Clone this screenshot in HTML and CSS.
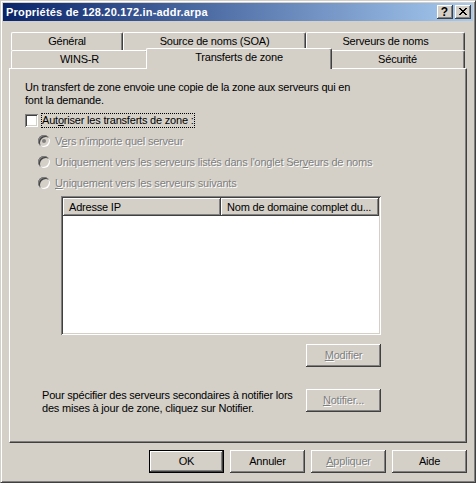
FILE: index.html
```html
<!DOCTYPE html>
<html lang="fr">
<head>
<meta charset="utf-8">
<title>Propriétés de 128.20.172.in-addr.arpa</title>
<link rel="stylesheet" href="styles.css">
</head>
<body>
<div class="window">
  <div class="titlebar">
    <span class="title">Propriétés de 128.20.172.in-addr.arpa</span>
    <div class="caption-btns">
      <span class="cbtn help">?</span>
      <span class="cbtn close">
        <svg width="8" height="7" viewBox="0 0 8 7" shape-rendering="crispEdges"><path d="M0 0h2v1H0zM6 0h2v1H6zM1 1h2v1H1zM5 1h2v1H5zM2 2h4v1H2zM3 3h2v1H3zM2 4h4v1H2zM1 5h2v1H1zM5 5h2v1H5zM0 6h2v1H0zM6 6h2v1H6z" fill="#000"/></svg>
      </span>
    </div>
  </div>
  <div class="client">
    <div class="tabctl">
      <div class="tabrow">
        <div class="tab tab-gen">Général</div>
        <div class="tab tab-soa">Source de noms (SOA)</div>
        <div class="tab tab-ns">Serveurs de noms</div>
      </div>
      <div class="tabrow">
        <div class="tab tab-wins">WINS-R</div>
        <div class="tab tab-xfer selected">Transferts de zone</div>
        <div class="tab tab-sec">Sécurité</div>
      </div>
      <div class="panel">
        <p class="intro">Un transfert de zone envoie une copie de la zone aux serveurs qui en<br>font la demande.</p>
        <div class="check-row">
          <span class="checkbox"></span>
          <span class="check-label focus">Aut<u>o</u>riser les transferts de zone :</span>
        </div>
        <div class="radios">
          <div class="radio-row"><span class="radio checked"></span><span class="disabled">V<u>e</u>rs n'importe quel serveur</span></div>
          <div class="radio-row"><span class="radio"></span><span class="disabled">Uniquement vers les serveurs listés dans l'onglet Ser<u>v</u>eurs de noms</span></div>
          <div class="radio-row"><span class="radio"></span><span class="disabled"><u>U</u>niquement vers les serveurs suivants</span></div>
        </div>
        <div class="listview">
          <div class="lv-header">
            <div class="lv-col col-ip">Adresse IP</div>
            <div class="lv-col col-fqdn">Nom de domaine complet du...</div>
          </div>
          <div class="lv-body"></div>
        </div>
        <div class="modify-row">
          <button class="btn" disabled><span class="disabled"><u>M</u>odifier</span></button>
        </div>
        <div class="notify-row">
          <p class="notify-text">Pour spécifier des serveurs secondaires à notifier lors<br>des mises à jour de zone, cliquez sur Notifier.</p>
          <button class="btn" disabled><span class="disabled"><u>N</u>otifier...</span></button>
        </div>
      </div>
    </div>
    <div class="dlg-buttons">
      <button class="btn default">OK</button>
      <button class="btn">Annuler</button>
      <button class="btn" disabled><span class="disabled"><u>A</u>ppliquer</span></button>
      <button class="btn">Aide</button>
    </div>
  </div>
</div>
</body>
</html>
```

FILE: styles.css
```css
* { box-sizing: border-box; }
html, body { margin: 0; padding: 0; background: #D4D0C8; }
body {
  font-family: "Liberation Sans", Arial, sans-serif;
  font-size: 11px;
  letter-spacing: -0.2px;
  color: #000;
}
u { text-decoration: underline; text-underline-offset: 1px; }

.window {
  width: 476px;
  height: 483px;
  background: #D4D0C8;
  border: 1px solid;
  border-color: #D4D0C8 #404040 #404040 #D4D0C8;
  box-shadow: inset 1px 1px #fff, inset -1px -1px #808080;
  padding: 2px;
  display: flex;
  flex-direction: column;
}

.titlebar {
  height: 18px;
  background: linear-gradient(to right, #0A246A, #A6CAF0);
  display: flex;
  align-items: center;
  justify-content: space-between;
  padding: 0 2px 0 3px;
}
.title {
  color: #fff;
  font-weight: bold;
  font-size: 11px;
  letter-spacing: 0.2px;
  line-height: 18px;
  white-space: nowrap;
}
.caption-btns { display: flex; gap: 2px; }
.cbtn {
  width: 16px;
  height: 14px;
  background: #D4D0C8;
  box-shadow: inset -1px -1px #404040, inset 1px 1px #fff, inset -2px -2px #808080;
  display: flex;
  align-items: center;
  justify-content: center;
}
.cbtn.help {
  font-weight: bold;
  font-size: 12px;
  letter-spacing: 0;
  line-height: 14px;
  padding: 0 1px 1px 0;
}
.cbtn.close svg { display: block; margin: 0 1px 1px 0; }

.client {
  flex: 1;
  display: flex;
  flex-direction: column;
}

.tabctl { margin: 11px 6px 0 6px; }
.tabrow {
  display: flex;
  height: 18px;
  padding: 0 2px;
  align-items: flex-start;
}
.tab {
  height: 18px;
  border-top: 1px solid #fff;
  border-left: 1px solid #fff;
  border-right: 1px solid #404040;
  border-radius: 2px 2px 0 0;
  box-shadow: inset -1px 0 #808080;
  background: #D4D0C8;
  display: flex;
  align-items: center;
  justify-content: center;
  white-space: nowrap;
  padding-bottom: 1px;
}
.tab-gen { width: 112px; }
.tab-soa { width: 183px; }
.tab-ns { width: 159px; }
.tab-wins { width: 137px; }
.tab-xfer { width: 182px; }
.tab-sec { width: 135px; }
.tab.selected {
  position: relative;
  z-index: 1;
  height: 21px;
  margin: -2px -2px -1px -2px;
  width: 186px;
  padding-bottom: 4px;
}

.panel {
  height: 375px;
  border: 1px solid;
  border-color: #fff #404040 #404040 #fff;
  box-shadow: inset -1px -1px #808080;
  padding: 12px 15px 0 15px;
}

.intro { margin: 0; line-height: 13px; }

.check-row {
  display: flex;
  align-items: center;
  height: 15px;
  margin-top: 6px;
}
.checkbox {
  width: 13px;
  height: 13px;
  background: #fff;
  box-shadow: inset 1px 1px #808080, inset -1px -1px #fff, inset 2px 2px #404040, inset -2px -2px #D4D0C8;
}
.check-label {
  margin-left: 3px;
  padding: 0 1px;
  line-height: 13px;
  height: 15px;
  display: flex;
  align-items: center;
}
.focus { outline: 1px dotted #000; outline-offset: -1px; }

.radios { margin-top: 2px; padding-left: 13px; }
.radio-row {
  height: 21px;
  display: flex;
  align-items: center;
}
.radio {
  width: 12px;
  height: 12px;
  border-radius: 50%;
  background: #D4D0C8;
  box-shadow: inset 1px 1px #808080, inset -1px -1px #fff, inset 2px 2px #404040, inset -2px -2px #D4D0C8;
  margin-right: 5px;
  position: relative;
  flex: none;
}
.radio.checked::after {
  content: "";
  position: absolute;
  left: 4px;
  top: 4px;
  width: 4px;
  height: 4px;
  border-radius: 50%;
  background: #808080;
}
.disabled {
  color: #808080;
  text-shadow: 1px 1px 0 #fff;
}

.listview {
  margin: 3px 0 0 36px;
  width: 320px;
  height: 139px;
  background: #fff;
  padding: 2px;
  box-shadow: inset 1px 1px #808080, inset -1px -1px #fff, inset 2px 2px #404040, inset -2px -2px #D4D0C8;
  display: flex;
  flex-direction: column;
}
.lv-header { display: flex; height: 18px; }
.lv-col {
  background: #D4D0C8;
  box-shadow: inset -1px -1px #404040, inset 1px 1px #fff, inset -2px -2px #808080;
  display: flex;
  align-items: center;
  padding: 0 6px 1px 6px;
  white-space: nowrap;
}
.col-ip { width: 158px; }
.col-fqdn { width: 158px; }
.lv-body { flex: 1; }

.btn {
  width: 75px;
  height: 23px;
  font: inherit;
  letter-spacing: inherit;
  color: #000;
  background: #D4D0C8;
  border: none;
  padding: 0 0 1px 0;
  box-shadow: inset -1px -1px #404040, inset 1px 1px #fff, inset -2px -2px #808080;
  display: flex;
  align-items: center;
  justify-content: center;
  border-radius: 0;
}
.btn.default {
  border: 1px solid #000;
  box-shadow: inset -1px -1px #404040, inset 1px 1px #fff, inset -2px -2px #808080;
}

.modify-row { margin: 9px 0 0 281px; }

.notify-row {
  display: flex;
  margin-top: 22px;
  padding-left: 17px;
}
.notify-text {
  margin: 0;
  line-height: 13px;
  width: 264px;
}

.dlg-buttons {
  display: flex;
  justify-content: flex-end;
  gap: 6px;
  margin: 7px 6px 0 0;
}
```
